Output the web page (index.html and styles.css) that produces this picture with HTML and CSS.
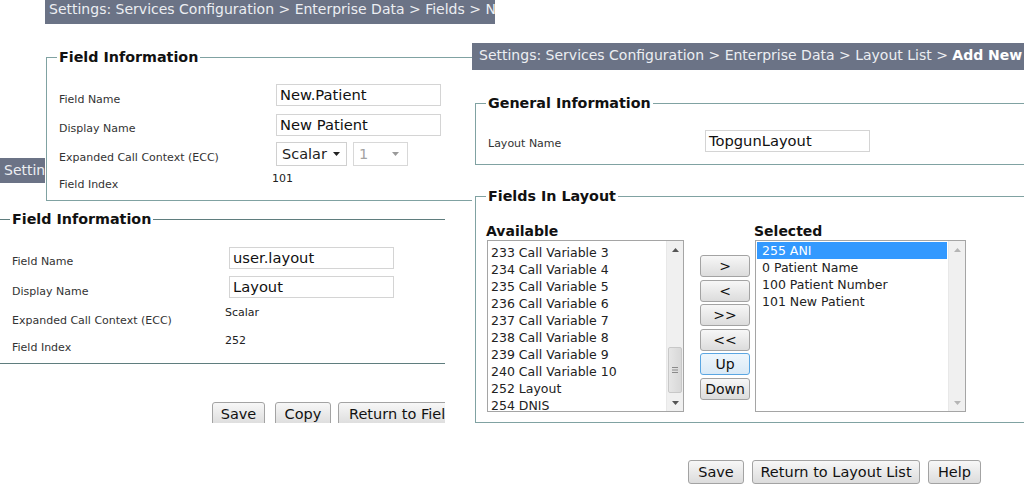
FILE: index.html
```html
<!DOCTYPE html>
<html lang="en">
<head>
<meta charset="utf-8">
<title>Enterprise Data settings</title>
<link rel="stylesheet" href="styles.css">
</head>
<body>

<section class="win win-b">
  <div class="crumb">Settings: Services Configuration &gt; Enterprise Data &gt; Fields &gt; Edit</div>
  <fieldset class="fs fs-b">
    <legend>Field Information</legend>
    <div class="grid grid-b">
      <div class="lbl">Field Name</div>
      <div class="val"><div class="inp">user.layout</div></div>
      <div class="lbl">Display Name</div>
      <div class="val"><div class="inp">Layout</div></div>
      <div class="lbl">Expanded Call Context (ECC)</div>
      <div class="val txt shift">Scalar</div>
      <div class="lbl">Field Index</div>
      <div class="val txt shift">252</div>
    </div>
  </fieldset>
  <div class="actions actions-b">
    <button class="btn b-save">Save</button>
    <button class="btn b-copy">Copy</button>
    <button class="btn b-ret">Return to Field List</button>
  </div>
</section>

<section class="win win-a">
  <div class="crumb">Settings: Services Configuration &gt; Enterprise Data &gt; Fields &gt; New</div>
  <fieldset class="fs fs-a">
    <legend>Field Information</legend>
    <div class="grid grid-a">
      <div class="lbl">Field Name</div>
      <div class="val"><div class="inp">New.Patient</div></div>
      <div class="lbl">Display Name</div>
      <div class="val"><div class="inp">New Patient</div></div>
      <div class="lbl">Expanded Call Context (ECC)</div>
      <div class="val sels">
        <div class="sel sel-1">Scalar <svg width="7" height="4" viewBox="0 0 7 4"><path d="M0 0H7L3.5 4Z" fill="#222"/></svg></div>
        <div class="sel sel-2 off">1 <svg width="7" height="4" viewBox="0 0 7 4"><path d="M0 0H7L3.5 4Z" fill="#9a9a9a"/></svg></div>
      </div>
      <div class="lbl">Field Index</div>
      <div class="val txt shift">101</div>
    </div>
  </fieldset>
</section>

<section class="win win-c">
  <div class="crumb">Settings: Services Configuration &gt; Enterprise Data &gt; Layout List &gt; <b>Add New</b></div>
  <fieldset class="fs fs-gi">
    <legend>General Information</legend>
    <div class="grid grid-c">
      <div class="lbl">Layout Name</div>
      <div class="val"><div class="inp">TopgunLayout</div></div>
    </div>
  </fieldset>
  <fieldset class="fs fs-fl">
    <legend>Fields In Layout</legend>
    <div class="lists">
      <div class="col col-avail">
        <div class="head">Available</div>
        <div class="listbox lb-avail">
          <ul class="items">
            <li>233 Call Variable 3</li>
            <li>234 Call Variable 4</li>
            <li>235 Call Variable 5</li>
            <li>236 Call Variable 6</li>
            <li>237 Call Variable 7</li>
            <li>238 Call Variable 8</li>
            <li>239 Call Variable 9</li>
            <li>240 Call Variable 10</li>
            <li>252 Layout</li>
            <li>254 DNIS</li>
          </ul>
          <div class="sbar">
            <div class="arr"><svg width="7" height="4" viewBox="0 0 7 4"><path d="M0 4H7L3.5 0Z" fill="#555"/></svg></div>
            <div class="track">
              <div class="thumb"><svg width="6" height="6" viewBox="0 0 6 6"><path d="M0 .5H6M0 3H6M0 5.5H6" stroke="#8a8a8a" stroke-width="1"/></svg></div>
            </div>
            <div class="arr"><svg width="7" height="4" viewBox="0 0 7 4"><path d="M0 0H7L3.5 4Z" fill="#555"/></svg></div>
          </div>
        </div>
      </div>
      <div class="movebtns">
        <button class="btn mv">&gt;</button>
        <button class="btn mv">&lt;</button>
        <button class="btn mv">&gt;&gt;</button>
        <button class="btn mv">&lt;&lt;</button>
        <button class="btn mv focus">Up</button>
        <button class="btn mv">Down</button>
      </div>
      <div class="col col-sel">
        <div class="head">Selected</div>
        <div class="listbox lb-sel">
          <ul class="items">
            <li class="hl">255 ANI</li>
            <li>0 Patient Name</li>
            <li>100 Patient Number</li>
            <li>101 New Patient</li>
          </ul>
          <div class="sbar">
            <div class="arr"><svg width="7" height="4" viewBox="0 0 7 4"><path d="M0 4H7L3.5 0Z" fill="#b5b5b5"/></svg></div>
            <div class="track"></div>
            <div class="arr"><svg width="7" height="4" viewBox="0 0 7 4"><path d="M0 0H7L3.5 4Z" fill="#b5b5b5"/></svg></div>
          </div>
        </div>
      </div>
    </div>
  </fieldset>
  <div class="actions actions-c">
    <button class="btn c-save">Save</button>
    <button class="btn c-ret">Return to Layout List</button>
    <button class="btn c-help">Help</button>
  </div>
</section>

</body>
</html>
```

FILE: styles.css
```css
* { box-sizing: border-box; }
html, body { margin: 0; padding: 0; }
body {
  width: 1024px;
  height: 486px;
  overflow: hidden;
  position: relative;
  background: #fff;
  font-family: "DejaVu Sans", Verdana, sans-serif;
  color: #222;
}

/* three overlapping screenshots, placed like windows on a desktop */
.win { position: absolute; background: #fff; overflow: hidden; }
.win-a { left: 45px; top: 0; width: 450px; height: 203px; z-index: 2; }
.win-b { left: 0; top: 158px; width: 445px; height: 265px; z-index: 1; }
.win-c { left: 472px; top: 43px; width: 552px; height: 443px; z-index: 3; }

.crumb {
  background: #6b7386;
  color: #eceef2;
  font-size: 14px;
  white-space: nowrap;
  overflow: hidden;
}
.win-a .crumb { height: 24px; line-height: 19px; padding-left: 4px; }
.win-b .crumb { height: 25px; line-height: 24px; padding-left: 4px; }
.win-c .crumb { height: 27px; line-height: 24px; padding-left: 7px; }
.crumb b { color: #fff; font-weight: bold; }

.fs {
  border: 1px solid #80a2a2;
  margin: 0;
  padding: 0 10px;
  min-width: 0;
}
.fs legend {
  padding: 0 2px;
  font-size: 14.3px;
  line-height: 18px;
  font-weight: bold;
  color: #111;
}
.fs-a { margin: 24px 0 0 1px; width: 480px; padding-bottom: 5px; }
.fs-b {
  margin: 27px 0 0 0;
  width: 460px;
  border-color: #5f7d7e;
  border-left: none;
  border-right: none;
  padding-bottom: 3px;
}
.fs-gi { margin: 24px 0 0 3px; width: 600px; padding-bottom: 11px; }
.fs-fl { margin: 22px 0 0 3px; width: 600px; padding-bottom: 10px; }

.grid {
  display: grid;
  grid-template-columns: 217px auto;
  padding-left: 2px;
}
.grid-a { margin-top: 17px; grid-template-rows: 30px 28px 30px 24px; }
.grid-b { margin-top: 18px; grid-template-rows: 29px 30px 28px 27px; }
.grid-c { margin-top: 17px; grid-template-rows: 24px; }
.grid-c .lbl { margin-top: 4px; }

.lbl {
  align-self: center;
  margin-top: 2px;
  font-size: 11px;
  line-height: 13px;
  color: #333;
  white-space: nowrap;
}
.val { align-self: start; margin-top: 1px; }
.txt { font-size: 11px; line-height: 13px; color: #222; }
.shift { margin-left: -4px; }

.inp {
  width: 165px;
  height: 22px;
  border: 1px solid #d4d4d4;
  padding: 0 3px;
  font-size: 14.7px;
  line-height: 20px;
  color: #111;
  white-space: nowrap;
  overflow: hidden;
}

.sels { display: flex; gap: 6px; }
.sel {
  height: 24px;
  border: 1px solid #d0d0d0;
  display: flex;
  align-items: center;
  justify-content: space-between;
  padding: 0 6px 0 5px;
  font-size: 14.5px;
  color: #222;
}
.sel-1 { width: 71px; }
.sel-2 { width: 55px; padding-right: 8px; }
.sel.off { color: #a3a3a3; border-color: #d8d8d8; }

.actions { display: flex; }
.actions-b { margin-top: 38px; padding-left: 212px; }
.actions-c { margin-top: 37px; padding-left: 216px; gap: 8px; }

.btn {
  height: 24px;
  border: 1px solid #a3a3a3;
  border-radius: 3px;
  background: linear-gradient(#f7f7f7, #dcdcdc);
  font-family: inherit;
  font-size: 14.5px;
  color: #111;
  padding: 0;
  white-space: nowrap;
  flex: none;
}
.b-save { width: 53px; }
.b-copy { width: 56px; margin-left: 10px; }
.b-ret { width: 130px; margin-left: 7px; text-align: left; padding-left: 10px; }
.c-save { width: 56px; }
.c-ret { width: 168px; }
.c-help { width: 53px; }

/* lists */
.lists { display: flex; align-items: flex-start; margin-top: 18px; }
.head { font-size: 14px; line-height: 17px; font-weight: bold; color: #111; }
.col-avail .listbox { margin-left: 1px; width: 197px; }
.col-sel .listbox { margin-left: 1px; width: 211px; }
.listbox {
  height: 172px;
  border: 1px solid #a5a5a5;
  display: flex;
  background: #fff;
}
.items {
  list-style: none;
  margin: 0;
  flex: 1;
  font-size: 12.5px;
  line-height: 17px;
  color: #222;
  white-space: nowrap;
  overflow: hidden;
}
.lb-avail .items { padding: 3px 0 0 3px; }
.lb-sel .items { padding: 1px 1px 0 1px; }
.lb-sel li { padding-left: 5px; }
.lb-sel li.hl { background: #3399ff; color: #fff; }

.sbar {
  width: 17px;
  display: flex;
  flex-direction: column;
  background: #f0f0f0;
  border-left: 1px solid #e8e8e8;
}
.arr { height: 17px; display: flex; align-items: center; justify-content: center; flex: none; }
.track { flex: 1; }
.thumb {
  margin: 89px 1px 0 1px;
  height: 46px;
  border: 1px solid #c8c8c8;
  border-radius: 2px;
  background: linear-gradient(90deg, #e6e6e6, #d8d8d8);
  display: flex;
  align-items: center;
  justify-content: center;
}

.movebtns {
  margin: 32px 0 0 16px;
  width: 50px;
  display: flex;
  flex-direction: column;
  gap: 2.5px;
}
.mv { width: 50px; height: 22px; font-size: 14px; }
.mv.focus {
  border-color: #5aa6e2;
  background: linear-gradient(#eef6fc, #d9e9f6);
}
.col-sel { margin-left: 4px; }
```
